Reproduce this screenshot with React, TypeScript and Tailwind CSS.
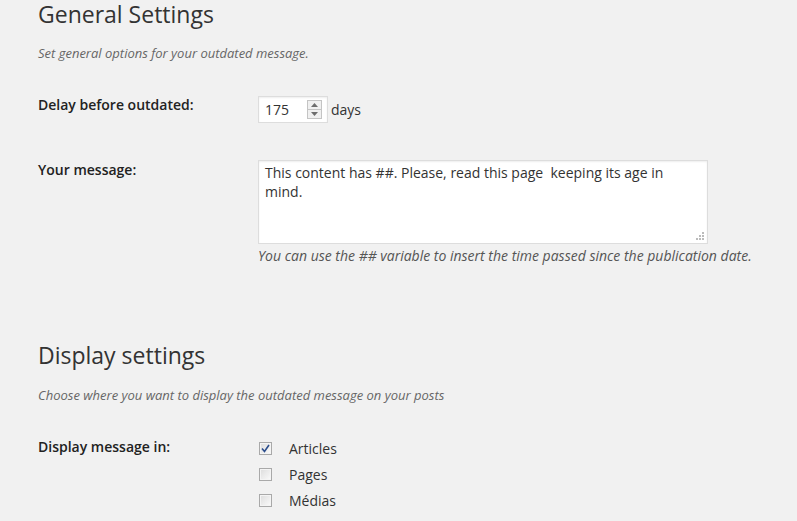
import { useState } from "react";

function Checkbox({ checked, label }: { checked: boolean; label: string }) {
    return (
        <label className="flex h-[26px] items-center">
            <span className="flex h-[13px] w-[13px] items-center justify-center border border-[#a9a9a9] bg-gradient-to-br from-[#dcdcdc] to-[#fbfbfb] shadow-[inset_0_0_0_1px_#f4f4f4]">
                {checked && (
                    <svg width="9" height="9" viewBox="0 0 9 9">
                        <path
                            d="M1 4.5 L3.5 7.5 L8 1"
                            fill="none"
                            stroke="#2b4d8c"
                            strokeWidth="1.6"
                        />
                    </svg>
                )}
            </span>
            <span className="ml-[17px] text-[14px] text-[#333]">{label}</span>
        </label>
    );
}

function Spinner() {
    return (
        <span className="ml-auto mr-[5px] flex h-[19px] w-[15px] flex-col border border-[#c4c4c4] bg-[#f0f0f0]">
            <span className="flex flex-1 items-center justify-center border-b border-[#c4c4c4]">
                <svg width="7" height="4" viewBox="0 0 7 4">
                    <path d="M0 4 L3.5 0 L7 4 Z" fill="#6d6d6d" />
                </svg>
            </span>
            <span className="flex flex-1 items-center justify-center">
                <svg width="7" height="4" viewBox="0 0 7 4">
                    <path d="M0 0 L3.5 4 L7 0 Z" fill="#6d6d6d" />
                </svg>
            </span>
        </span>
    );
}

export default function App() {
    const [message] = useState([
        "This content has ##. Please, read this page  keeping its age in",
        "mind.",
    ]);

    return (
        <div
            className="min-h-[521px] w-[797px] bg-[#f1f1f1] pl-[38px] text-[#444]"
            style={{ fontFamily: '"Open Sans", sans-serif' }}
        >
            <h2 className="pt-px text-[23px] leading-[27px] text-[#333]">
                General Settings
            </h2>
            <p className="mt-[15px] text-[13px] italic leading-[20px] text-[#666]">
                Set general options for your outdated message.
            </p>

            <div className="mt-[32px] flex">
                <div className="w-[220px] text-[14px] font-semibold leading-[20px] text-[#222]">
                    Delay before outdated:
                </div>
                <div className="mt-px flex items-center">
                    <div className="flex h-[27px] w-[70px] items-center border border-[#ddd] bg-white pl-[6px] text-[14px] text-[#333] shadow-[inset_0_1px_2px_rgba(0,0,0,0.07)]">
                        175
                        <Spinner />
                    </div>
                    <span className="ml-[3px] text-[14px] text-[#333]">days</span>
                </div>
            </div>

            <div className="mt-[37px] flex">
                <div className="w-[220px] text-[14px] font-semibold leading-[20px] text-[#222]">
                    Your message:
                </div>
                <div>
                    <div className="relative h-[84px] w-[450px] whitespace-pre-wrap border border-[#ddd] bg-white px-[6px] pt-[2px] text-[14px] leading-[19px] text-[#333] shadow-[inset_0_1px_2px_rgba(0,0,0,0.07)]">
                        {message.map((line) => (
                            <div key={line}>{line}</div>
                        ))}
                        <svg
                            className="absolute bottom-[2px] right-[2px]"
                            width="10"
                            height="10"
                            viewBox="0 0 10 10"
                        >
                            <rect x="7" y="1" width="2" height="2" fill="#bbb" />
                            <rect x="4" y="4" width="2" height="2" fill="#bbb" />
                            <rect x="7" y="4" width="2" height="2" fill="#bbb" />
                            <rect x="1" y="7" width="2" height="2" fill="#bbb" />
                            <rect x="4" y="7" width="2" height="2" fill="#bbb" />
                            <rect x="7" y="7" width="2" height="2" fill="#bbb" />
                        </svg>
                    </div>
                    <p className="mt-[2px] text-[14px] italic leading-[20px] text-[#555]">
                        You can use the ## variable to insert the time passed since the publication date.
                    </p>
                </div>
            </div>

            <h2 className="mt-[75px] pt-px text-[23px] leading-[27px] text-[#333]">
                Display settings
            </h2>
            <p className="mt-[16px] text-[13px] italic leading-[20px] text-[#666]">
                Choose where you want to display the outdated message on your posts
            </p>

            <div className="mt-[30px] flex">
                <div className="w-[221px] pt-[2px] text-[14px] font-semibold leading-[20px] text-[#222]">
                    Display message in:
                </div>
                <div className="flex flex-col">
                    <Checkbox checked label="Articles" />
                    <Checkbox checked={false} label="Pages" />
                    <Checkbox checked={false} label="Médias" />
                </div>
            </div>
        </div>
    );
}
